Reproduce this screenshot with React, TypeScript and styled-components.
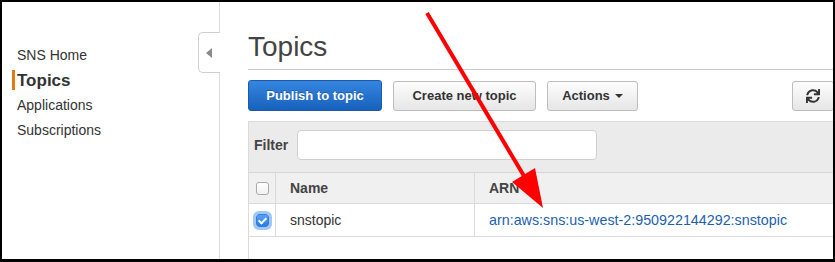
import React from "react";
import styled, { createGlobalStyle } from "styled-components";
import { FaSync } from "react-icons/fa";

const GlobalStyle = createGlobalStyle`
  html, body {
    margin: 0;
    padding: 0;
    background: #fff;
  }
  body {
    font-family: "Liberation Sans", Arial, Helvetica, sans-serif;
    color: #333;
  }
  * {
    box-sizing: border-box;
  }
`;

const App: React.FunctionComponent = () => {
  return (
    <Stage>
      <GlobalStyle />
      <Frame>
        <Sidebar>
          <NavItem>SNS Home</NavItem>
          <NavItem active>Topics</NavItem>
          <NavItem>Applications</NavItem>
          <NavItem>Subscriptions</NavItem>
          <CollapseTab>
            <LeftTriangle />
          </CollapseTab>
        </Sidebar>
        <Main>
          <Title>Topics</Title>
          <Rule />
          <Toolbar>
            <Button primary width={134}>
              Publish to topic
            </Button>
            <Button width={143}>Create new topic</Button>
            <Button width={91}>
              Actions <Caret />
            </Button>
            <RefreshButton>
              <FaSync size={14} color="#333" />
            </RefreshButton>
          </Toolbar>
          <Panel>
            <FilterRow>
              <FilterLabel>Filter</FilterLabel>
              <FilterInput type="text" />
            </FilterRow>
            <Table>
              <HeadCell>
                <Check />
              </HeadCell>
              <HeadCell>Name</HeadCell>
              <HeadCell last>ARN</HeadCell>
              <BodyCell>
                <Check checked />
              </BodyCell>
              <BodyCell>snstopic</BodyCell>
              <BodyCell last>
                <Link>arn:aws:sns:us-west-2:950922144292:snstopic</Link>
              </BodyCell>
            </Table>
          </Panel>
        </Main>
      </Frame>
      <ArrowOverlay viewBox="0 0 835 262" width={835} height={262}>
        <line
          x1={427}
          y1={13}
          x2={524}
          y2={176}
          stroke="#ff0000"
          strokeWidth={4}
        />
        <polygon points="512,182 535,168 543,208" fill="#ff0000" />
      </ArrowOverlay>
    </Stage>
  );
};

export default App;

const Stage = styled.div`
  position: relative;
  width: 835px;
  height: 262px;
  overflow: hidden;
`;

const Frame = styled.div`
  width: 835px;
  height: 262px;
  border-style: solid;
  border-color: #000;
  border-width: 2px 2px 3px 2px;
  display: flex;
  overflow: hidden;
  background: #fff;
`;

const Sidebar = styled.nav`
  position: relative;
  flex: 0 0 218px;
  border-right: 1px solid #dcdcdc;
  padding: 41px 0 0 15px;
`;

const NavItem = styled.div<{ active?: boolean }>`
  position: relative;
  height: 25px;
  line-height: 25px;
  font-size: ${({ active }) => (active ? "17px" : "14px")};
  font-weight: ${({ active }) => (active ? "bold" : "normal")};
  color: #333;
  &::before {
    content: "";
    display: ${({ active }) => (active ? "block" : "none")};
    position: absolute;
    left: -5px;
    top: 2px;
    width: 3px;
    height: 20px;
    background: #e47911;
  }
`;

const CollapseTab = styled.div`
  position: absolute;
  top: 30px;
  right: -1px;
  width: 22px;
  height: 41px;
  border: 1px solid #cfcfcf;
  border-right: none;
  border-radius: 5px 0 0 5px;
  background: #fff;
  display: flex;
  align-items: center;
  justify-content: center;
`;

const LeftTriangle = styled.span`
  width: 0;
  height: 0;
  border-top: 5px solid transparent;
  border-bottom: 5px solid transparent;
  border-right: 6px solid #8a8a8a;
  margin-right: 2px;
`;

const Main = styled.main`
  flex: 0 0 614px;
  padding: 29px 0 0 28px;
`;

const Title = styled.h1`
  margin: 0;
  font-size: 28px;
  line-height: 32px;
  font-weight: normal;
  color: #444;
`;

const Rule = styled.div`
  margin-top: 6px;
  border-top: 1px solid #cccccc;
`;

const Toolbar = styled.div`
  display: flex;
  align-items: center;
  gap: 11px;
  margin-top: 10px;
`;

const Button = styled.button<{ primary?: boolean; width: number }>`
  width: ${({ width }) => width}px;
  height: ${({ primary }) => (primary ? "31px" : "30px")};
  padding: 0;
  border-radius: 3px;
  font-family: inherit;
  font-size: 13px;
  font-weight: bold;
  display: flex;
  align-items: center;
  justify-content: center;
  color: ${({ primary }) => (primary ? "#fff" : "#333")};
  border: 1px solid ${({ primary }) => (primary ? "#1a5aa8" : "#bdbdbd")};
  background: ${({ primary }) =>
    primary
      ? "linear-gradient(#3586e0, #1761bd)"
      : "linear-gradient(#fdfdfd, #e6e6e6)"};
  text-shadow: ${({ primary }) =>
    primary ? "0 -1px 0 rgba(0, 0, 0, 0.25)" : "none"};
`;

const Caret = styled.span`
  width: 0;
  height: 0;
  margin-left: 5px;
  border-left: 4px solid transparent;
  border-right: 4px solid transparent;
  border-top: 4px solid #333;
`;

const RefreshButton = styled.button`
  margin-left: auto;
  width: 42px;
  height: 30px;
  padding: 0;
  border-radius: 3px;
  border: 1px solid #bdbdbd;
  background: linear-gradient(#fdfdfd, #e6e6e6);
  display: flex;
  align-items: center;
  justify-content: center;
`;

const Panel = styled.section`
  margin-top: 10px;
  border: 1px solid #dadada;
  border-right: none;
  background: #fff;
  height: 200px;
`;

const FilterRow = styled.div`
  display: flex;
  align-items: center;
  gap: 9px;
  padding: 8px 0 12px 5px;
  background: #ebebeb;
  border-bottom: 1px solid #d6d6d6;
`;

const FilterLabel = styled.label`
  font-size: 14px;
  font-weight: bold;
  color: #444;
`;

const FilterInput = styled.input`
  width: 300px;
  height: 30px;
  border: 1px solid #cfcfcf;
  border-radius: 4px;
  background: #fff;
`;

const Table = styled.div`
  display: grid;
  grid-template-columns: 27px 199px 1fr;
  grid-template-rows: 31px 33px;
`;

const Cell = styled.div<{ last?: boolean }>`
  display: flex;
  align-items: center;
  font-size: 14px;
  padding-left: 14px;
  border-bottom: 1px solid #dadada;
  border-right: ${({ last }) => (last ? "none" : "1px solid #dadada")};
  &:first-child,
  &:nth-child(4) {
    padding-left: 0;
    justify-content: center;
  }
`;

const HeadCell = styled(Cell)`
  background: #f0f0f0;
  font-weight: bold;
  color: #444;
`;

const BodyCell = styled(Cell)`
  background: #fff;
  color: #333;
`;

const Check = styled.span<{ checked?: boolean }>`
  position: relative;
  width: 13px;
  height: 13px;
  border-radius: 3px;
  border: 1px solid ${({ checked }) => (checked ? "#2f7de0" : "#a9a9a9")};
  background: ${({ checked }) =>
    checked ? "linear-gradient(#5aa2f5, #2a7ce6)" : "linear-gradient(#fff, #f1f1f1)"};
  box-shadow: ${({ checked }) =>
    checked ? "0 0 0 3px rgba(100, 160, 240, 0.6)" : "none"};
  &::after {
    content: "";
    display: ${({ checked }) => (checked ? "block" : "none")};
    position: absolute;
    left: 3px;
    top: 1px;
    width: 3px;
    height: 6px;
    border: solid #fff;
    border-width: 0 2px 2px 0;
    transform: rotate(45deg);
  }
`;

const Link = styled.a`
  color: #1d5fb0;
  font-size: 14.3px;
  text-decoration: none;
  white-space: nowrap;
`;

const ArrowOverlay = styled.svg`
  position: absolute;
  top: 0;
  left: 0;
  pointer-events: none;
`;
